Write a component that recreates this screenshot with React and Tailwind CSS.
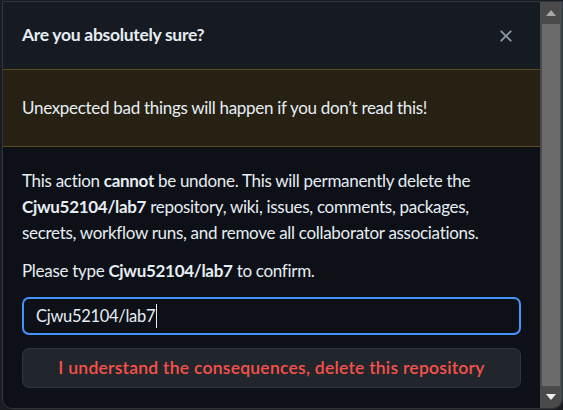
export default function App() {
  return (
    <div
      className="w-[563px] h-[410px] overflow-hidden bg-[#1a1c20] pl-[2px] pt-[1px]"
      style={{ fontFamily: 'Lato, "Noto Sans", sans-serif' }}
    >
      <div className="flex h-[408px] border border-[#30363d] rounded-b-[10px] overflow-hidden bg-[#0d1117]">
        {/* dialog content */}
        <div className="flex-1 flex flex-col">
          {/* header */}
          <div className="h-[67px] shrink-0 flex items-center justify-between bg-[#161b22] pl-[19px] pr-[24px]">
            <h1 className="text-[17.5px] font-bold text-[#e6edf3] tracking-[-0.3px]">Are you absolutely sure?</h1>
            <svg width="20" height="20" viewBox="0 0 16 16" fill="#8d96a0">
              <path d="M3.72 3.72a.75.75 0 0 1 1.06 0L8 6.94l3.22-3.22a.749.749 0 0 1 1.275.326.749.749 0 0 1-.215.734L9.06 8l3.22 3.22a.749.749 0 0 1-.326 1.275.749.749 0 0 1-.734-.215L8 9.06l-3.22 3.22a.751.751 0 0 1-1.042-.018.751.751 0 0 1-.018-1.042L6.94 8 3.72 4.78a.75.75 0 0 1 0-1.06Z" />
            </svg>
          </div>

          {/* warning flash */}
          <div className="h-[78px] shrink-0 flex items-center border-y border-[#5c4a1f] bg-[#272114] px-[19px]">
            <p className="text-[17px] leading-[26px] text-[#e6edf3] tracking-[-0.3px]">
              Unexpected bad things will happen if you don’t read this!
            </p>
          </div>

          {/* body */}
          <div className="flex flex-col px-[19px] pt-[21px] text-[17px] leading-[26px] text-[#e6edf3] whitespace-nowrap">
            <p className="tracking-[-0.3px]">
              This action <strong className="font-bold">cannot</strong> be undone. This will permanently delete the
              <br />
              <strong className="font-bold">Cjwu52104/lab7</strong> repository, wiki, issues, comments, packages,
              <br />
              secrets, workflow runs, and remove all collaborator associations.
            </p>
            <p className="mt-[12px] tracking-[-0.3px]">
              Please type <strong className="font-bold">Cjwu52104/lab7</strong> to confirm.
            </p>
            <div className="mt-[13px] h-[38px] shrink-0 flex items-center rounded-[7px] border-2 border-[#4493f8] bg-[#0d1117] px-[12px]">
              <span className="text-[#e6edf3] text-[16.5px] tracking-[-0.3px]">Cjwu52104/lab7</span>
              <span className="w-px h-[24px] bg-[#e6edf3] ml-[1px]" />
            </div>
            <button className="mt-[13px] h-[40px] shrink-0 rounded-[7px] border border-[#30363d] bg-[#21262d] text-[17.5px] text-[#f85149] font-semibold tracking-[0.25px]">
              I understand the consequences, delete this repository
            </button>
          </div>
        </div>

        {/* scrollbar */}
        <div className="w-[22px] flex flex-col bg-[#4a4a4a]">
          <div className="h-[22px] flex items-center justify-center">
            <svg width="10" height="6" viewBox="0 0 10 6"><path d="M5 0 L10 6 L0 6 Z" fill="#a8a8a8" /></svg>
          </div>
          <div className="flex-1 mx-[2px] bg-[#6b6b6b]" />
          <div className="h-[22px] flex items-center justify-center">
            <svg width="10" height="6" viewBox="0 0 10 6"><path d="M0 0 L10 0 L5 6 Z" fill="#f0f0f0" /></svg>
          </div>
        </div>
      </div>
    </div>
  );
}
